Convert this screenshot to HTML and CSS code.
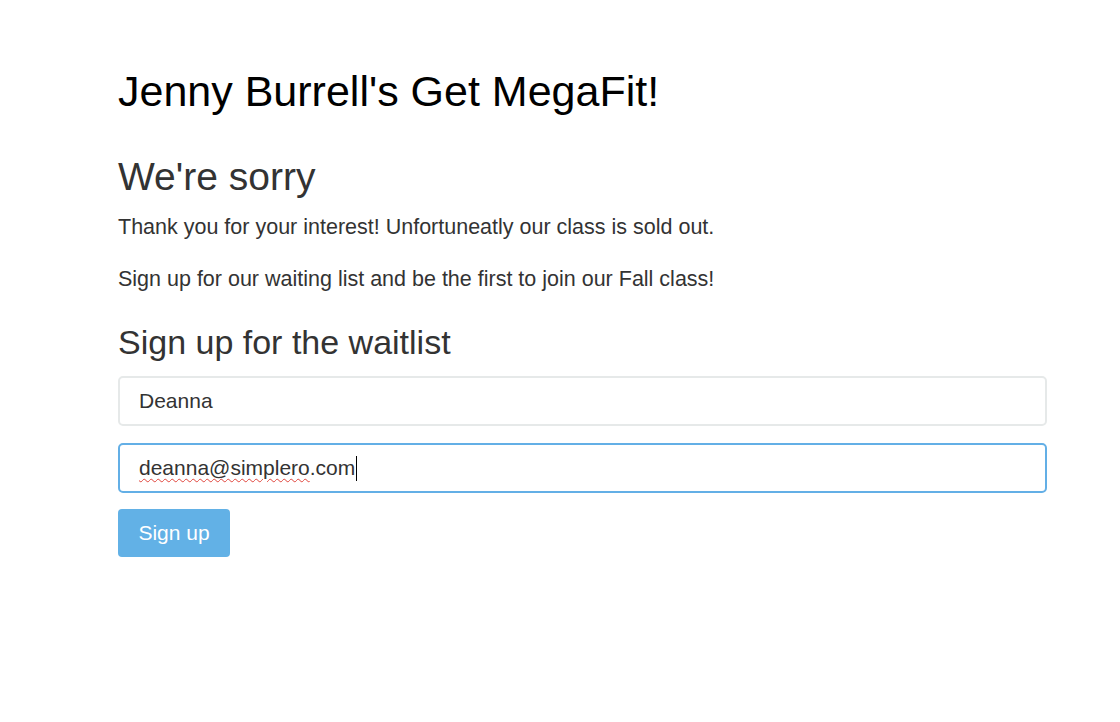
FILE: index.html
```html
<!DOCTYPE html>
<html>
<head>
	<title>Jenny Burrell's Get MegaFit!</title>
	<link rel="stylesheet" href="styles.css">
</head>
<body>
	<div class="page">
		<h1 class="brand">Jenny Burrell's Get MegaFit!</h1>

		<h2 class="sorry">We're sorry</h2>
		<p>Thank you for your interest! Unfortuneatly our class is sold out.</p>
		<p>Sign up for our waiting list and be the first to join our Fall class!</p>

		<h3 class="waitlist">Sign up for the waitlist</h3>
		<form class="signup">
			<div class="field">
				<input type="text" class="input" value="Deanna">
			</div>
			<div class="field last">
				<div class="input focused"><span class="typo">deanna@simplero</span>.com<span class="caret"></span></div>
			</div>
			<button type="button" class="btn">Sign up</button>
		</form>
	</div>
</body>
</html>
```
FILE: styles.css
```css
body {
	margin: 0;
	padding: 0;
	background-color: #fff;
	font-family: "Liberation Sans", Arial, sans-serif;
	color: #333;
}

.page {
	width: 930px;
	padding: 67px 0 0 118px;
}

.brand {
	font-size: 43px;
	font-weight: normal;
	color: #000;
	line-height: 48px;
	margin: 0 0 40px 0;
}

.sorry {
	font-size: 39px;
	font-weight: normal;
	line-height: 44px;
	margin: 0 0 14px 0;
}

p {
	font-size: 21.5px;
	line-height: 28px;
	margin: 0 0 24px 0;
}

/* p margin collapses into this one */
.waitlist {
	font-size: 34px;
	font-weight: normal;
	line-height: 40px;
	margin: 29px 0 14px 0;
}

.field {
	margin-bottom: 17px;
}

.field.last {
	margin-bottom: 16px;
}

.input {
	box-sizing: border-box;
	display: flex;
	align-items: center;
	width: 929px;
	height: 50px;
	padding: 0 19px;
	border: 2px solid #e6e9e9;
	border-radius: 5px;
	font-family: "Liberation Sans", Arial, sans-serif;
	font-size: 21px;
	color: #333;
	background: #fff;
	outline: none;
}

.input.focused {
	border-color: #63afe6;
}

.typo {
	text-decoration: underline wavy #e0453c;
	text-decoration-thickness: 1px;
	text-underline-offset: 3px;
}

.caret {
	display: inline-block;
	width: 1px;
	height: 25px;
	background: #000;
	margin-left: 1px;
}

.btn {
	width: 112px;
	height: 48px;
	border: none;
	border-radius: 4px;
	background-color: #62b1e6;
	color: #fff;
	font-family: "Liberation Sans", Arial, sans-serif;
	font-size: 21px;
	padding: 0;
}
```
